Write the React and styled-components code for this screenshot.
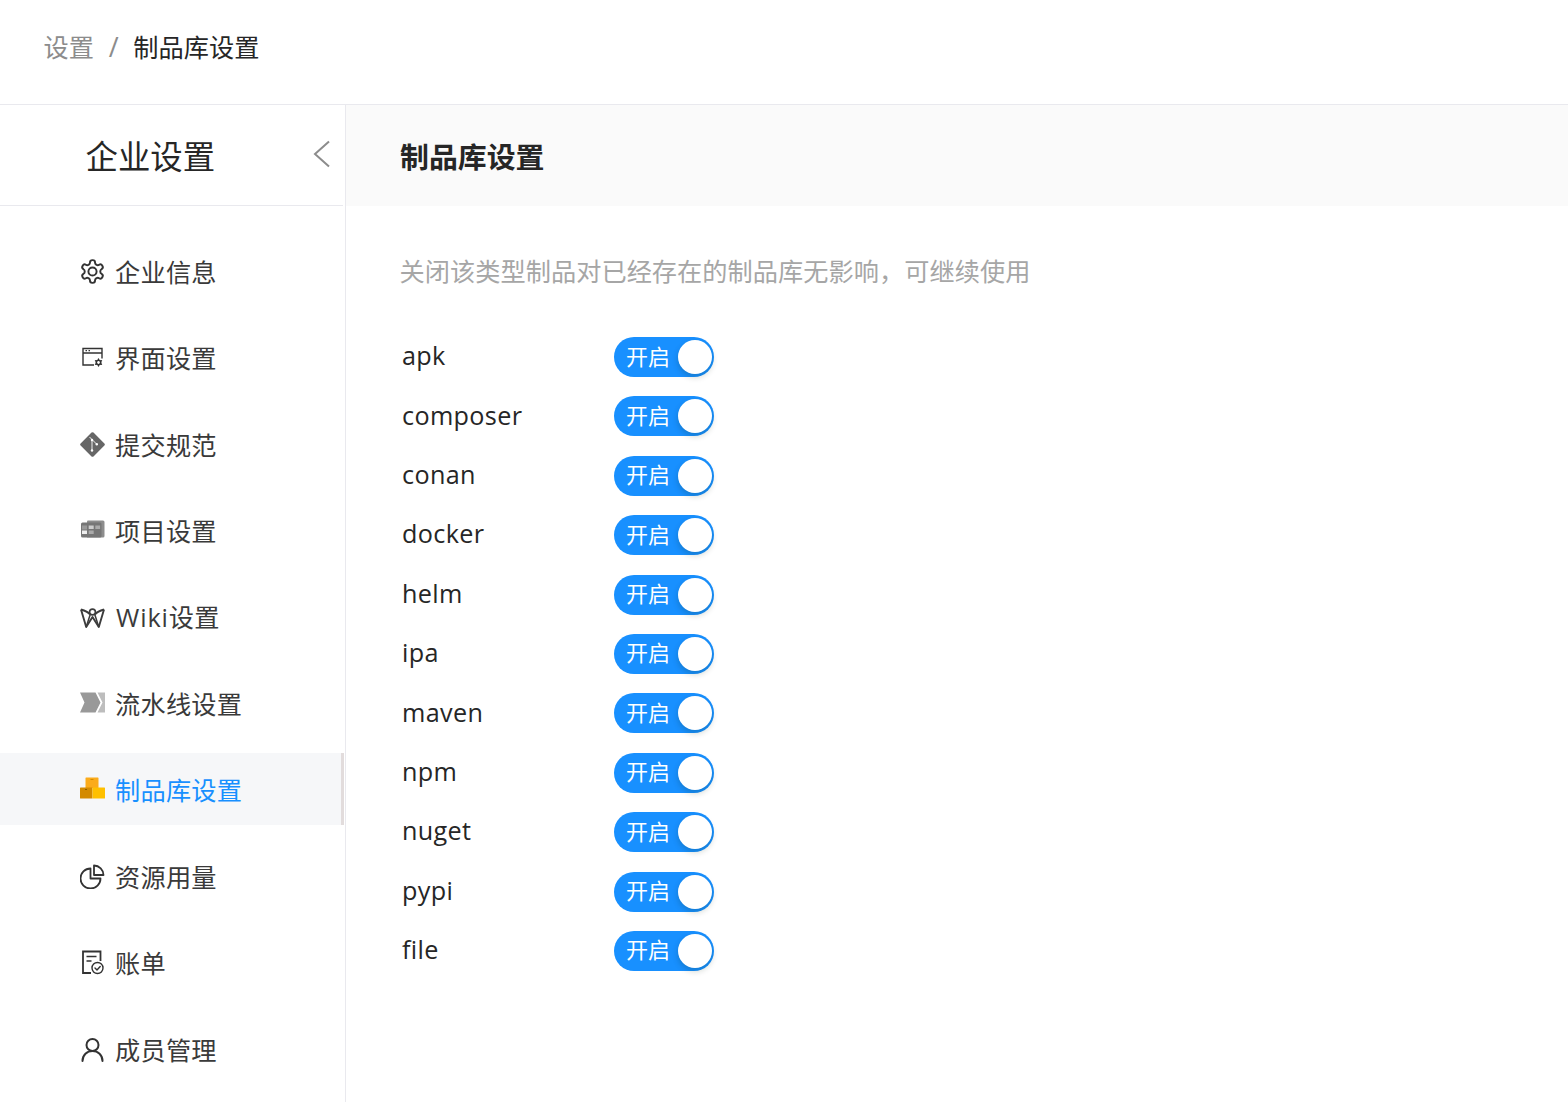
import React from "react";
import styled, { createGlobalStyle } from "styled-components";

const Global = createGlobalStyle`
  html, body { margin: 0; padding: 0; background: #fff; }
  body { font-family: "Open Sans", "Noto Sans CJK SC", sans-serif; color: #262626; }
  * { box-sizing: border-box; }
`;

const Page = styled.div`
  width: 1568px;
  height: 1102px;
  overflow: hidden;
  display: flex;
  flex-direction: column;
`;
const TopBar = styled.header`
  height: 105px;
  flex: none;
  border-bottom: 1px solid #e9e9ee;
  padding: 0 44px 12px 43.5px;
  display: flex;
  align-items: center;
  font-size: 25.2px;
  letter-spacing: 0.05px;
`;
const Crumb = styled.span`
  color: ${(p) => (p.$current ? "#262626" : "#8c8c8c")};
`;
const Slash = styled.span`
  color: #8c8c8c;
  margin: 0 14.7px;
  font-size: 27px;
`;
const Body = styled.div`
  flex: 1;
  display: flex;
  min-height: 0;
`;
const Side = styled.aside`
  width: 346px;
  flex: none;
  border-right: 1px solid #e9e9ee;
`;
const SideHead = styled.div`
  height: 101px;
  border-bottom: 1px solid #e9e9ee;
  margin-right: 2px;
  padding: 2px 0 0 85.5px;
  display: flex;
  align-items: center;
  justify-content: space-between;
  font-size: 32.4px;
  line-height: 1;
`;
const Collapse = styled.svg`
  width: 18px;
  height: 28px;
  margin: 0 12px 4px 0;
  color: #8c8c8c;
`;
const Menu = styled.nav`
  padding-top: 29px;
  display: flex;
  flex-direction: column;
  gap: 14.4px;
`;
const Item = styled.div`
  height: 72px;
  padding-left: 80px;
  display: flex;
  align-items: center;
  gap: 10px;
  font-size: 25.2px;
  letter-spacing: 0.25px;
  color: ${(p) => (p.$active ? "#1890ff" : "#3a3a3a")};
  background: ${(p) => (p.$active ? "#f6f7f9" : "transparent")};
  border-right: 3px solid ${(p) => (p.$active ? "#e2dcdc" : "transparent")};
  margin-right: 1px;
`;
const ItemText = styled.span`
  padding-bottom: ${(p) => (p.$latin ? "2px" : "0")};
`;
const Latin = styled.span`
  letter-spacing: 0.9px;
  margin-left: 1px;
`;
const Icon = styled.svg`
  width: 25px;
  height: 25px;
  flex: none;
  margin-top: 1px;
`;
const Main = styled.main`
  flex: 1;
  min-width: 0;
`;
const MainHead = styled.div`
  height: 101px;
  background: #fafafa;
  padding: 0 0 2px 54px;
  display: flex;
  align-items: center;
  font-size: 28.9px;
  font-weight: 700;
  color: #262626;
`;
const Content = styled.section`
  padding: 47px 54px 0;
`;
const Hint = styled.p`
  margin: 0 0 48px -0.5px;
  font-size: 25.2px;
  letter-spacing: 0.05px;
  line-height: 36px;
  color: #a6a6a6;
`;
const Rows = styled.div`
  display: flex;
  flex-direction: column;
  gap: 19.4px;
`;
const Row = styled.div`
  display: flex;
  align-items: center;
  height: 40px;
`;
const Label = styled.span`
  width: 214px;
  padding: 0 0 3.5px 2px;
  font-size: 25.2px;
  letter-spacing: 0.35px;
  line-height: 38px;
  color: #262626;
`;
const Switch = styled.div`
  width: 100px;
  height: 40px;
  border-radius: 20px;
  background: #1890ff;
  padding: 0 2px 0 12px;
  display: flex;
  align-items: center;
  justify-content: space-between;
  color: #fff;
  font-size: 22px;
`;
const SwitchText = styled.span`
  padding-bottom: 5px;
`;
const Knob = styled.span`
  width: 34px;
  height: 34px;
  border-radius: 50%;
  background: #fff;
  box-shadow: 0 3px 6px rgba(0, 35, 11, 0.2);
`;

const s = { fill: "none", stroke: "currentColor", strokeLinecap: "round", strokeLinejoin: "round" };

const icons = {
  gear: (
    <Icon viewBox="1 1 22 22" {...s} strokeWidth="1.7" color="#333">
      <path d="M12.22 2h-.44a2 2 0 0 0-2 2v.18a2 2 0 0 1-1 1.73l-.43.25a2 2 0 0 1-2 0l-.15-.08a2 2 0 0 0-2.73.73l-.22.38a2 2 0 0 0 .73 2.73l.15.1a2 2 0 0 1 1 1.72v.51a2 2 0 0 1-1 1.74l-.15.09a2 2 0 0 0-.73 2.73l.22.38a2 2 0 0 0 2.73.73l.15-.08a2 2 0 0 1 2 0l.43.25a2 2 0 0 1 1 1.73V20a2 2 0 0 0 2 2h.44a2 2 0 0 0 2-2v-.18a2 2 0 0 1 1-1.73l.43-.25a2 2 0 0 1 2 0l.15.08a2 2 0 0 0 2.73-.73l.22-.39a2 2 0 0 0-.73-2.73l-.15-.08a2 2 0 0 1-1-1.74v-.5a2 2 0 0 1 1-1.74l.15-.09a2 2 0 0 0 .73-2.73l-.22-.38a2 2 0 0 0-2.73-.73l-.15.08a2 2 0 0 1-2 0l-.43-.25a2 2 0 0 1-1-1.73V4a2 2 0 0 0-2-2z" />
      <circle cx="12" cy="12" r="3.6" />
    </Icon>
  ),
  ui: (
    <Icon viewBox="0 0 25 25" color="#333">
      <path d="M14 20H3V3.500h19V13.500M3 8h19" {...s} strokeWidth="1.4" strokeLinecap="butt" strokeLinejoin="miter" />
      <path d="M5.500 5.700h1.500M8.500 5.700H10" {...s} strokeWidth="1.2" strokeLinecap="butt" />
      <circle cx="18.500" cy="17.500" r="2.200" {...s} strokeWidth="1.600" />
      <path d="M18.500 14v1.300M18.500 19.700V21M15.500 15.700l1.100.7M20.400 18.600l1.100.7M15.500 19.300l1.100-.7M20.400 16.400l1.100-.7" {...s} strokeWidth="1.300" />
    </Icon>
  ),
  git: (
    <Icon viewBox="0 0 25 25">
      <rect x="3.400" y="3.400" width="18.200" height="18.200" rx="1.400" transform="rotate(45 12.500 12.500)" fill="#666" />
      <path d="M9.500 5l7.500 7.500M12 7.500v10.500" fill="none" stroke="#fff" strokeWidth="0.900" />
      <circle cx="12" cy="8" r="1.200" fill="#fff" />
      <circle cx="16.800" cy="12.300" r="1.200" fill="#fff" />
      <circle cx="12" cy="18.500" r="1.200" fill="#fff" />
    </Icon>
  ),
  project: (
    <Icon viewBox="0 -2 25 25">
      <path d="M7 1.500a1 1 0 0 1 1-1h15a1.500 1.500 0 0 1 1.500 1.500v14a1.500 1.500 0 0 1-1.500 1.500H7z" fill="#8d8d8d" />
      <rect x="1" y="2.500" width="20.500" height="15" rx="1.500" fill="#767676" />
      <rect x="2" y="5.500" width="5" height="4" fill="#999" />
      <rect x="2" y="10.500" width="5" height="3.500" fill="#eee" />
      <rect x="8.700" y="5.500" width="5" height="3.500" fill="#ccc" />
      <rect x="8.700" y="10.500" width="5" height="3.500" fill="#aaa" />
      <rect x="15.300" y="5.500" width="4.800" height="3.500" fill="#aaa" />
    </Icon>
  ),
  wiki: (
    <Icon viewBox="0 -2 25 25" fill="none" stroke="#3c3c3c" strokeWidth="1.900" strokeLinejoin="round">
      <path d="M1 2.500L6.200 20 12.500 10 18.800 20 24 2.500" />
      <path d="M1 2.500C4.500 3.500 8 5 10 7.300M24 2.500C20.500 3.500 17 5 15 7.300" />
      <path d="M10.300 7.300L6.200 20M14.700 7.300L18.800 20" strokeWidth="1.500" />
      <circle cx="12.500" cy="5" r="2.900" strokeWidth="1.600" />
    </Icon>
  ),
  pipe: (
    <Icon viewBox="0 0 25 25">
      <path d="M0 1.500h15.500l5 10-5 10H0l4.500-10z" fill="#999" />
      <path d="M17.500 1.500H25v20h-7.500l5-10z" fill="#bdbdbd" />
    </Icon>
  ),
  box: (
    <Icon viewBox="0 0.500 25 25">
      <rect x="5.500" y="1" width="13" height="10.500" rx="0.600" fill="#fbab1b" />
      <rect x="0" y="11" width="12.500" height="11" rx="0.600" fill="#d38a00" />
      <rect x="12.500" y="11" width="12.500" height="11" rx="0.600" fill="#ffc000" />
      <rect x="10.500" y="2.500" width="3" height="1" fill="#d38a00" />
      <rect x="5" y="12.500" width="2" height="1" fill="#8f5d00" />
    </Icon>
  ),
  pie: (
    <Icon viewBox="0 0 25 25" {...s} strokeWidth="1.800" color="#333">
      <path d="M10.500 4.500a10 10 0 1 0 10 10h-10z" strokeLinecap="butt" />
      <path d="M14 1.500a9.500 9.500 0 0 1 9.500 9.500H14z" strokeLinecap="butt" />
    </Icon>
  ),
  bill: (
    <Icon viewBox="0 0 25 25" color="#333">
      <path d="M11 23H3V1.500h17.500V11" {...s} strokeWidth="1.800" strokeLinecap="butt" strokeLinejoin="miter" />
      <path d="M6.500 6.500h10M6.500 11h5" {...s} strokeWidth="1.600" strokeLinecap="butt" />
      <circle cx="17.500" cy="18" r="5.500" {...s} strokeWidth="1.400" />
      <path d="M15 18l2 2 3.200-3.500" {...s} strokeWidth="1.400" />
    </Icon>
  ),
  user: (
    <Icon viewBox="0 0 25 25" {...s} strokeWidth="2" color="#333">
      <circle cx="12.500" cy="8" r="6" />
      <path d="M2.500 24c0-6 4.500-10 10-10s10 4 10 10" />
    </Icon>
  ),
};

const menu = [
  { icon: "gear", text: "企业信息" },
  { icon: "ui", text: "界面设置" },
  { icon: "git", text: "提交规范" },
  { icon: "project", text: "项目设置" },
  { icon: "wiki", latin: "Wiki", text: "设置" },
  { icon: "pipe", text: "流水线设置" },
  { icon: "box", text: "制品库设置", active: true },
  { icon: "pie", text: "资源用量" },
  { icon: "bill", text: "账单" },
  { icon: "user", text: "成员管理" },
];
const types = ["apk", "composer", "conan", "docker", "helm", "ipa", "maven", "npm", "nuget", "pypi", "file"];

export default function App() {
  return (
    <Page>
      <Global />
      <TopBar>
        <Crumb>设置</Crumb>
        <Slash>/</Slash>
        <Crumb $current>制品库设置</Crumb>
      </TopBar>
      <Body>
        <Side>
          <SideHead>
            企业设置
            <Collapse viewBox="0 0 18 28">
              <path d="M16 1.500L2 14l14 12.500" fill="none" stroke="currentColor" strokeWidth="2" />
            </Collapse>
          </SideHead>
          <Menu>
            {menu.map((m) => (
              <Item key={m.icon} $active={m.active}>
                {icons[m.icon]}
                <ItemText $latin={!!m.latin}>
                  {m.latin && <Latin>{m.latin}</Latin>}
                  {m.text}
                </ItemText>
              </Item>
            ))}
          </Menu>
        </Side>
        <Main>
          <MainHead>制品库设置</MainHead>
          <Content>
            <Hint>关闭该类型制品对已经存在的制品库无影响，可继续使用</Hint>
            <Rows>
              {types.map((t) => (
                <Row key={t}>
                  <Label>{t}</Label>
                  <Switch>
                    <SwitchText>开启</SwitchText>
                    <Knob />
                  </Switch>
                </Row>
              ))}
            </Rows>
          </Content>
        </Main>
      </Body>
    </Page>
  );
}
